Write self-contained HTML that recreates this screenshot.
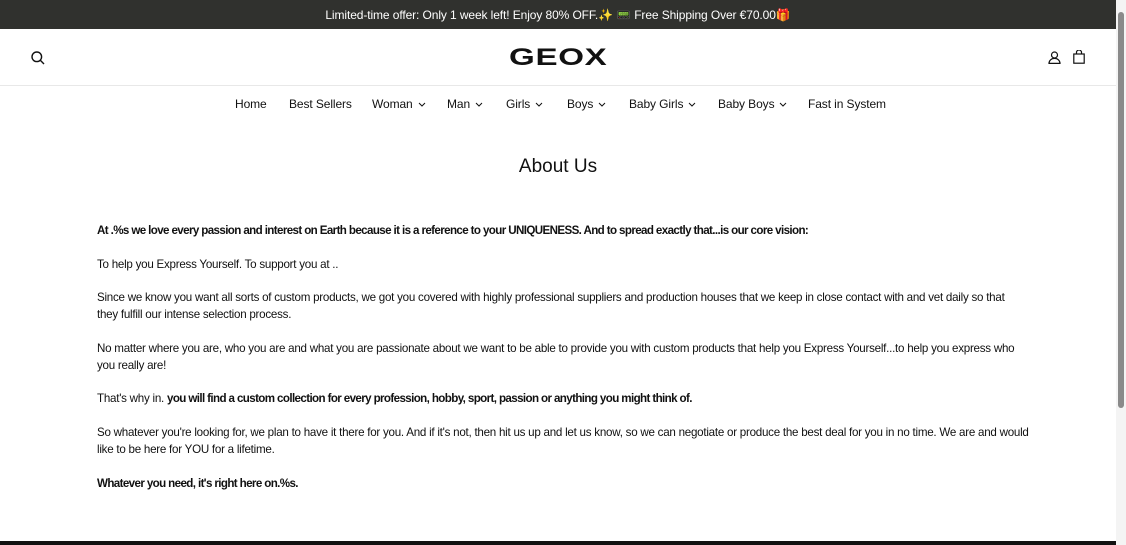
<!DOCTYPE html>
<html><head><meta charset="utf-8"><style>
*{margin:0;padding:0;box-sizing:border-box}
body{width:1126px;height:545px;overflow:hidden;background:#fff;font-family:"Liberation Sans",sans-serif;color:#111;position:relative}
.top{position:absolute;left:0;top:0;width:1116px;height:29px;background:#30312e;color:#fff;font-size:12px;text-align:center;line-height:30px;letter-spacing:-0.1px}
.hdr{position:absolute;left:0;top:29px;width:1116px;height:57px;border-bottom:1px solid #e8e8e8}
.logo{position:absolute;left:509px;top:17px;font-size:24px;font-weight:bold;letter-spacing:0.5px;transform:scaleX(1.38);transform-origin:left;line-height:24px}
.nav{position:absolute;top:97px;left:0;width:1116px;font-size:12px;white-space:nowrap;letter-spacing:-0.1px}
.nav span{position:absolute}
.nav svg{margin-left:5px;vertical-align:1px}
h1{position:absolute;top:156px;left:0;width:1116px;text-align:center;font-weight:normal;font-size:19px}
.c{position:absolute;left:97px;width:930px;font-size:11.6px;line-height:17px;letter-spacing:-0.25px}
b{font-weight:bold;letter-spacing:-0.62px}
.sb{position:absolute;right:0;top:0;width:10px;height:545px;background:#f4f4f4}
.th{position:absolute;right:2px;top:12px;width:6px;height:396px;background:#8a8a8a;border-radius:3px}
.bot{position:absolute;left:0;top:541px;width:1116px;height:4px;background:#111}
</style></head><body>
<div class="top">Limited-time offer: Only 1 week left! Enjoy 80% OFF.✨ 📟 Free Shipping Over €70.00🎁</div>
<div class="hdr">
<svg style="position:absolute;left:31px;top:22px" width="14" height="14" viewBox="0 0 14 14" fill="none" stroke="#111" stroke-width="1.4"><circle cx="5.8" cy="5.8" r="4.8"/><path d="M9.3 9.3L13 13"/></svg>
<div class="logo">GEOX</div>
<svg style="position:absolute;left:1048px;top:22px" width="13" height="13" viewBox="0 0 13 13" fill="none" stroke="#111" stroke-width="1.2"><circle cx="6.5" cy="4" r="3"/><path d="M1 12.4h11c0-3-2.5-5-5.5-5S1 9.4 1 12.4z"/></svg>
<svg style="position:absolute;left:1073px;top:21px" width="12" height="14" viewBox="0 0 12 14" fill="none" stroke="#111" stroke-width="1.2"><rect x="0.8" y="4" width="10.4" height="9.2"/><path d="M3.5 4V2.5a2.5 2.5 0 015 0V4"/></svg>
</div>
<div class="nav">
<span style="left:235px">Home</span>
<span style="left:289px">Best Sellers</span>
<span style="left:372px">Woman<svg width="8" height="5" viewBox="0 0 8 5"><path d="M1 1l3 3 3-3" fill="none" stroke="#111"/></svg></span>
<span style="left:447px">Man<svg width="8" height="5" viewBox="0 0 8 5"><path d="M1 1l3 3 3-3" fill="none" stroke="#111"/></svg></span>
<span style="left:506px">Girls<svg width="8" height="5" viewBox="0 0 8 5"><path d="M1 1l3 3 3-3" fill="none" stroke="#111"/></svg></span>
<span style="left:567px">Boys<svg width="8" height="5" viewBox="0 0 8 5"><path d="M1 1l3 3 3-3" fill="none" stroke="#111"/></svg></span>
<span style="left:629px">Baby Girls<svg width="8" height="5" viewBox="0 0 8 5"><path d="M1 1l3 3 3-3" fill="none" stroke="#111"/></svg></span>
<span style="left:718px">Baby Boys<svg width="8" height="5" viewBox="0 0 8 5"><path d="M1 1l3 3 3-3" fill="none" stroke="#111"/></svg></span>
<span style="left:808px">Fast in System</span>
</div>
<h1>About Us</h1>
<div class="c" style="top:222px"><b>At .%s we love every passion and interest on Earth because it is a reference to your UNIQUENESS. And to spread exactly that...is our core vision:</b></div>
<div class="c" style="top:256px">To help you Express Yourself. To support you at ..</div>
<div class="c" style="top:289px">Since we know you want all sorts of custom products, we got you covered with highly professional suppliers and production houses that we keep in close contact with and vet daily so that they fulfill our intense selection process.</div>
<div class="c" style="top:340px">No matter where you are, who you are and what you are passionate about we want to be able to provide you with custom products that help you Express Yourself...to help you express who you really are!</div>
<div class="c" style="top:390px">That's why in. <b>you will find a custom collection for every profession, hobby, sport, passion or anything you might think of.</b></div>
<div class="c" style="top:424px;width:945px">So whatever you're looking for, we plan to have it there for you. And if it's not, then hit us up and let us know, so we can negotiate or produce the best deal for you in no time. We are and would like to be here for YOU for a lifetime.</div>
<div class="c" style="top:475px"><b>Whatever you need, it's right here on.%s.</b></div>
<div class="bot"></div>
<div class="sb"><div class="th"></div></div>
</body></html>
